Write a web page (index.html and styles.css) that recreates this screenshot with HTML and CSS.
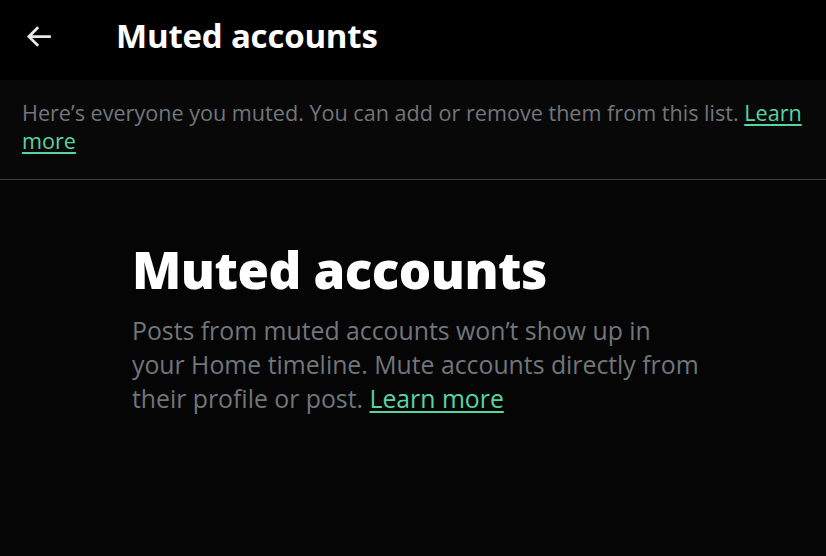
FILE: index.html
```html
<!DOCTYPE html>
<html lang="en">
<head>
<meta charset="utf-8">
<title>Muted accounts</title>
<link rel="stylesheet" href="styles.css">
</head>
<body>
<div class="page">
  <header class="topbar">
    <button class="back" aria-label="Back">
      <svg viewBox="0 0 24 24" width="33" height="33"><path d="M7.414 13l5.043 5.04-1.414 1.42L3.586 12l7.457-7.46 1.414 1.42L7.414 11H21v2H7.414z" fill="#e7e9ea"/></svg>
    </button>
    <h1 class="title">Muted accounts</h1>
  </header>
  <section class="intro">
    <p>Here’s everyone you muted. You can add or remove them from this list. <a href="#">Learn more</a></p>
  </section>
  <main class="empty">
    <div class="empty-inner">
      <h2>Muted accounts</h2>
      <p>Posts from muted accounts won’t show up in your Home timeline. Mute accounts directly from their profile or post. <a href="#">Learn more</a></p>
    </div>
  </main>
</div>
</body>
</html>
```
FILE: styles.css
```css
html, body {
  margin: 0;
  padding: 0;
  background: #050505;
}
body {
  font-family: "Open Sans", "Noto Sans", sans-serif;
  color: #e7e9ea;
}
.page {
  width: 826px;
  height: 556px;
  overflow: hidden;
}
.topbar {
  height: 72px;
  padding-bottom: 8px;
  background: #000;
  display: flex;
  align-items: center;
}
.back {
  background: none;
  border: 0;
  padding: 0;
  margin-left: 22px;
  width: 33px;
  height: 33px;
  display: flex;
  cursor: pointer;
}
.title {
  margin: 0 0 0 61px;
  font-size: 33px;
  line-height: 40px;
  font-weight: 700;
  color: #fff;
  letter-spacing: -0.2px;
}
.intro {
  background: #080808;
  border-bottom: 1px solid #3a3d41;
  padding: 19px 14px 24px 22px;
}
.intro p {
  margin: 0;
  font-size: 21.6px;
  line-height: 28px;
  color: #71767b;
}
a {
  color: #5ad49f;
  text-decoration: underline;
  text-underline-offset: 3px;
}
.empty {
  display: flex;
  justify-content: flex-start;
  padding: 60px 0 0 132px;
}
.empty-inner {
  width: 570px;
}
.empty h2 {
  margin: 0 0 15px;
  font-size: 51px;
  line-height: 58px;
  font-weight: 800;
  color: #fff;
  letter-spacing: -0.5px;
}
.empty p {
  margin: 0;
  font-size: 24.8px;
  line-height: 34px;
  color: #71767b;
}
```
